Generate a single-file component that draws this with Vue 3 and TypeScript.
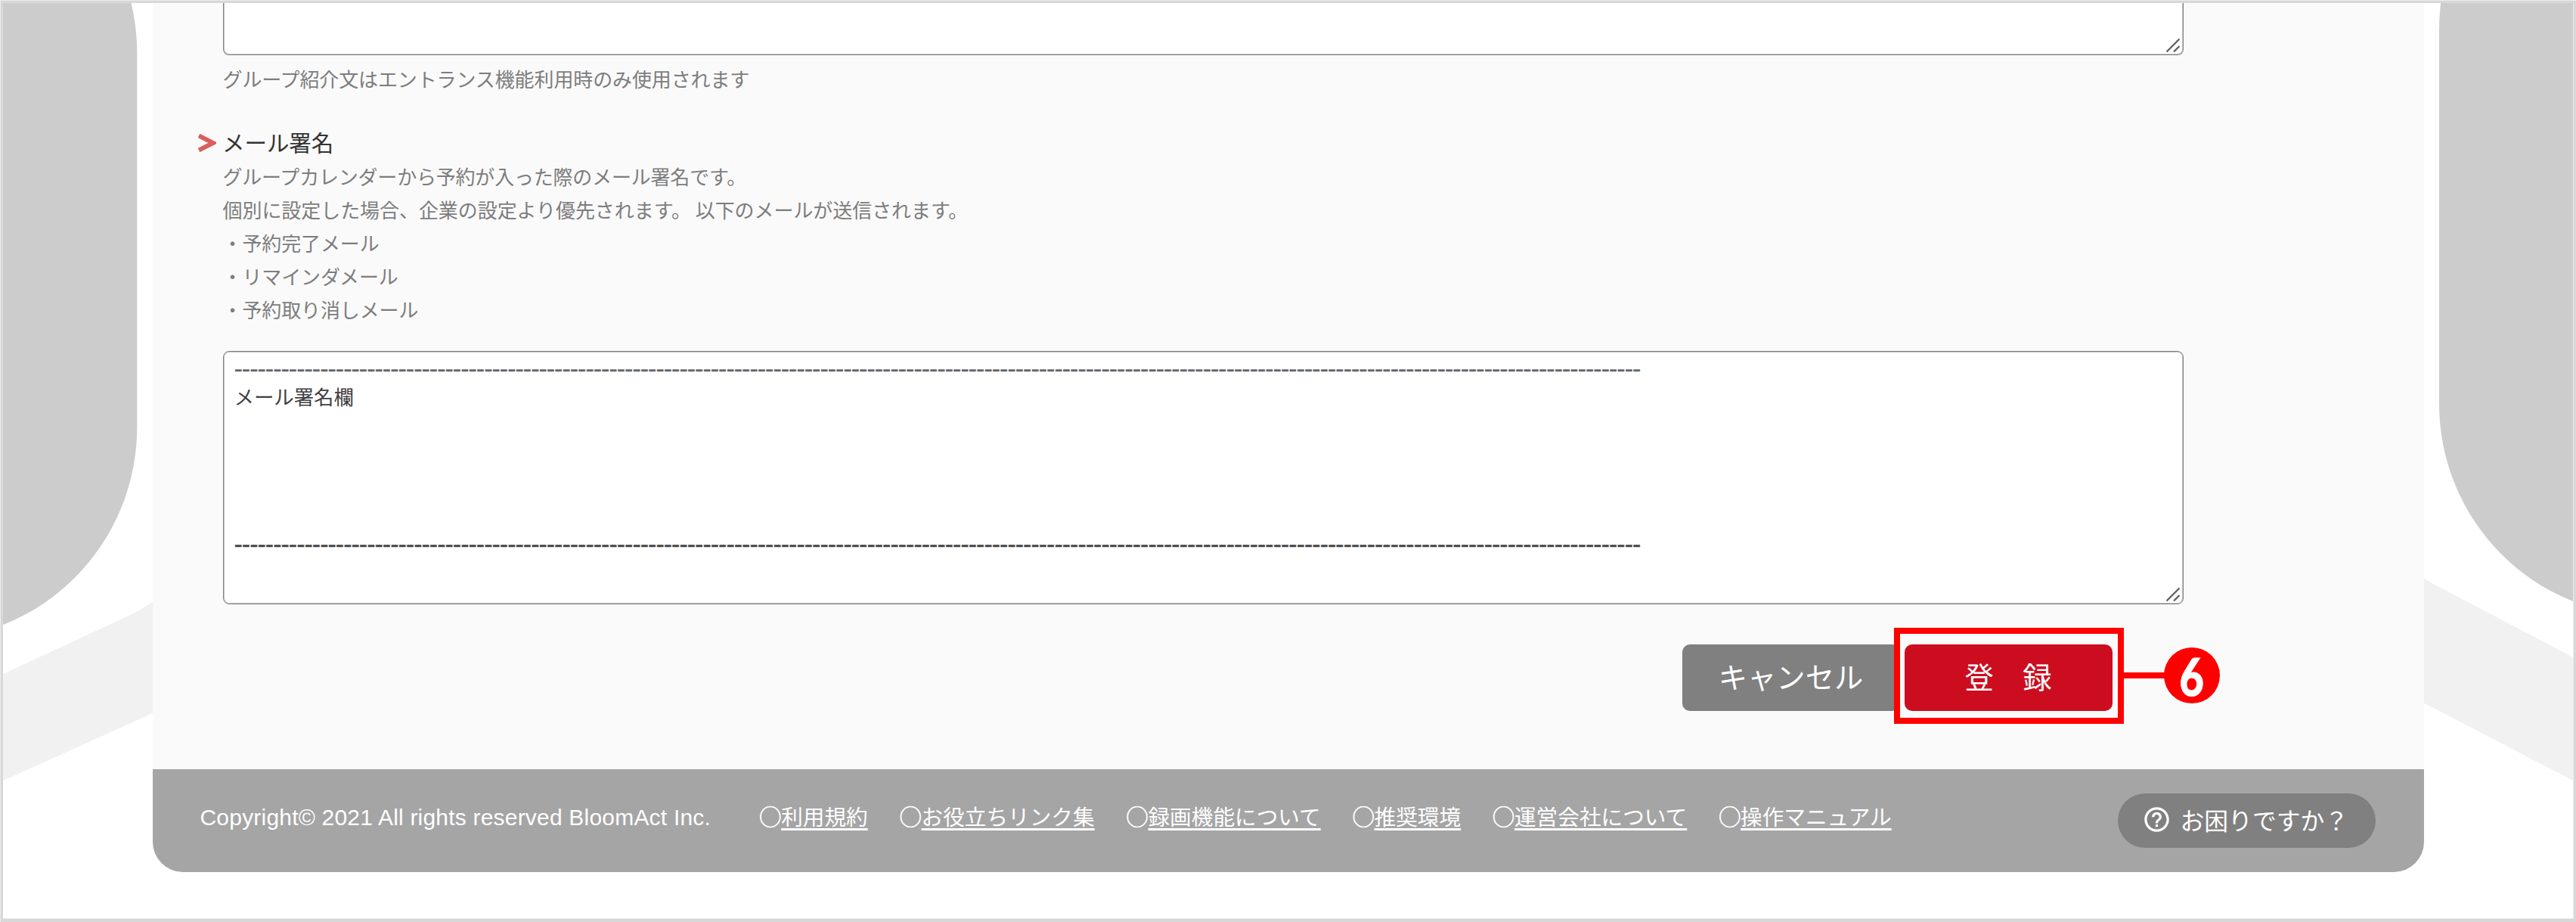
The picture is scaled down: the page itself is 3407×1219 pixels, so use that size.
<script setup lang="ts">
interface FooterLink {
  label: string
}

const notes: string[] = [
  'グループカレンダーから予約が入った際のメール署名です。',
  '個別に設定した場合、企業の設定より優先されます。 以下のメールが送信されます。',
  '・予約完了メール',
  '・リマインダメール',
  '・予約取り消しメール',
]

const rule: string = '-'.repeat(180)

const links: FooterLink[] = [
  { label: '利用規約' },
  { label: 'お役立ちリンク集' },
  { label: '録画機能について' },
  { label: '推奨環境' },
  { label: '運営会社について' },
  { label: '操作マニュアル' },
]
</script>

<template>
  <div class="page">
    <svg class="backdrop" viewBox="0 0 3407 1219" aria-hidden="true">
      <path d="M0 893 L168 815 Q186 807 204 794 L204 942 L0 1034Z" fill="#f1f1f1" />
      <path d="M3203 763 Q3214 770 3226 776 L3407 871 L3407 1034 L3203 928Z" fill="#f1f1f1" />
      <rect x="-400" y="-211" width="581.3" height="1057" rx="281" fill="#cccccc" />
      <rect x="3226" y="-242" width="581" height="1057" rx="281" fill="#cccccc" />
    </svg>

    <main class="panel">
      <section class="content">
        <div class="textarea intro-area">
          <svg class="grip" viewBox="0 0 20 20"><path d="M1.5 18.5 18.5 1.5M11 18.5 18.5 11" /></svg>
        </div>
        <p class="note intro-note">グループ紹介文はエントランス機能利用時のみ使用されます</p>

        <div class="heading">
          <svg class="chevron" viewBox="0 0 24 24"><path d="M1 2.500 20 12 1 21.500" /></svg>
          <h2>メール署名</h2>
        </div>
        <div class="notes">
          <p v-for="(note, i) in notes" :key="i" class="note" :class="'note-' + i">{{ note }}</p>
        </div>

        <div class="textarea sign-area">
          <div class="row dashes soft">{{ rule }}</div>
          <div class="row">メール署名欄</div>
          <div v-for="n in 4" :key="n" class="row"></div>
          <div class="row dashes">{{ rule }}</div>
          <svg class="grip" viewBox="0 0 20 20"><path d="M1.5 18.5 18.5 1.5M11 18.5 18.5 11" /></svg>
        </div>

        <div class="actions">
          <button class="btn cancel" type="button">キャンセル</button>
          <div class="submit">
            <button class="btn register" type="button">登　録</button>
            <div class="callout">
              <span class="leader"></span>
              <span class="badge"><span class="digit">6</span></span>
            </div>
          </div>
        </div>
      </section>

      <footer class="footer">
        <span class="copyright">Copyright© 2021 All rights reserved BloomAct Inc.</span>
        <nav class="links">
          <span v-for="link in links" :key="link.label" class="link"><span class="ring">◯</span><a>{{ link.label }}</a></span>
        </nav>
        <div class="help">
          <svg class="help-icon" viewBox="0 0 24 24">
            <path d="M11 18h2v-2h-2v2zm1-16C6.48 2 2 6.48 2 12s4.480 10 10 10 10-4.480 10-10S17.520 2 12 2zm0 18c-4.410 0-8-3.590-8-8s3.590-8 8-8 8 3.590 8 8-3.590 8-8 8zm0-14c-2.210 0-4 1.790-4 4h2c0-1.100.9-2 2-2s2 .9 2 2c0 2-3 1.750-3 5h2c0-2.250 3-2.500 3-5 0-2.210-1.790-4-4-4z" />
          </svg>
          <span class="help-label">お困りですか？</span>
        </div>
      </footer>
    </main>

    <div class="frame"></div>
  </div>
</template>

<style>
body {
  margin: 0;
  background: #fff;
}
</style>

<style scoped>
.page {
  position: relative;
  width: 3407px;
  height: 1219px;
  overflow: hidden;
  background: #fff;
  font-family: "Noto Sans CJK JP", sans-serif;
}
.page * {
  box-sizing: border-box;
}
.backdrop {
  position: absolute;
  inset: 0;
  width: 3407px;
  height: 1219px;
}
.frame {
  position: absolute;
  inset: 0;
  border-top: 1px solid #ebebeb;
  border-left: 1px solid #ebebeb;
  box-shadow: inset 3px 3px 0 #d8d8d8, inset -3px -4px 0 #d8d8d8, inset -4px -5px 0 #ebebeb;
}
.panel {
  position: relative;
  width: 3004px;
  height: 1152.5px;
  margin-left: 201.5px;
  border-radius: 0 0 40px 40px;
  overflow: hidden;
  display: flex;
  flex-direction: column;
}
.content {
  height: 1017px;
  flex: none;
  padding-left: 93px;
  background: #fafafa;
}
.textarea {
  position: relative;
  width: 2593.5px;
  border: 1px solid #808080;
  border-radius: 8px;
  background: #fff;
  box-shadow: inset 0 0 0 1px #c2c2c2;
}
.intro-area {
  height: 73px;
  border-top: 0;
  border-radius: 0 0 8px 8px;
}
.grip {
  position: absolute;
  right: 3px;
  bottom: 2px;
  width: 20px;
  height: 20px;
  fill: none;
  stroke: #5c5c5c;
  stroke-width: 2.2;
}
.note {
  margin: 0;
  height: 44.2px;
  line-height: 44.2px;
  font-size: 26px;
  letter-spacing: -0.12px;
  color: #7d7d7d;
  white-space: pre;
}
.note-0 {
  letter-spacing: -0.2px;
}
.note-1 {
  letter-spacing: -0.06px;
}
.intro-note {
  margin-top: 9px;
}
.heading {
  display: flex;
  align-items: center;
  height: 44px;
  margin-top: 41px;
  margin-left: -33px;
}
.chevron {
  width: 24px;
  height: 24px;
  margin-right: 8.5px;
  fill: none;
  stroke: #da6060;
  stroke-width: 6;
}
h2 {
  margin: -4px 0 0;
  font-size: 29.5px;
  font-weight: 400;
  letter-spacing: -0.05px;
  color: #333;
  line-height: 44px;
}
.notes {
  margin-top: -0.5px;
  margin-bottom: 32.8px;
}
.sign-area {
  height: 335px;
  padding: 3px 14px;
}
.row {
  height: 38.6px;
  line-height: 34.5px;
  font-size: 26.4px;
  color: #3f3f43;
  white-space: pre;
}
.dashes {
  font-family: "Liberation Sans", sans-serif;
  font-size: 34px;
  line-height: 38.6px;
  letter-spacing: -0.99px;
  -webkit-text-stroke: 0.3px currentColor;
}
.soft {
  color: #63656a;
}
.actions {
  display: flex;
  margin-top: 31px;
  margin-left: 1930px;
  height: 127px;
  align-items: flex-start;
}
.btn {
  border: 0;
  padding: 0;
  height: 88px;
  border-radius: 10px;
  color: #fff;
  font-family: inherit;
  font-size: 38.3px;
  line-height: 84px;
  padding-bottom: 4px;
  white-space: pre;
}
.cancel {
  width: 288px;
  margin-top: 22px;
  background: #808080;
}
.submit {
  position: relative;
  display: flex;
  width: 304.5px;
  height: 127px;
  margin-left: -8px;
  border: 8px solid #f00;
  background: #fafafa;
  padding: 14px 0 0 6px;
}
.register {
  width: 275px;
  background: #cc0d1f;
}
.callout {
  position: absolute;
  left: 296px;
  top: 18px;
  display: flex;
  align-items: center;
  height: 74px;
}
.leader {
  width: 54px;
  height: 8px;
  background: #f00;
}
.badge {
  width: 74px;
  height: 74px;
  margin-left: -1px;
  border-radius: 50%;
  background: #f00;
  color: #fff;
  font-family: Lato, sans-serif;
  font-weight: 900;
  font-size: 68px;
  line-height: 76px;
  text-align: center;
}
.digit {
  display: inline-block;
  transform: scaleX(0.82);
  -webkit-text-stroke: 1px #fff;
}
.footer {
  flex: 1;
  display: flex;
  align-items: flex-start;
  background: #a5a5a5;
  color: #fff;
  padding-left: 63px;
}
.copyright {
  width: 740px;
  height: 44px;
  margin-top: 42px;
  font-family: "Liberation Sans", sans-serif;
  font-size: 30px;
  line-height: 44px;
  letter-spacing: 0.2px;
  white-space: nowrap;
}
.links {
  display: flex;
  width: 1796px;
  gap: 42.2px;
  height: 44px;
  margin-top: 40px;
  font-size: 28.65px;
  line-height: 44px;
  white-space: nowrap;
}
.link {
  display: flex;
}
.ring {
  -webkit-text-stroke: 0.7px #fff;
}
.link a {
  text-decoration: underline;
  text-decoration-thickness: 3px;
  text-underline-offset: 4px;
  text-decoration-skip-ink: none;
}
.help {
  display: flex;
  align-items: center;
  width: 341.5px;
  height: 72px;
  margin-top: 32px;
  padding-left: 32px;
  border-radius: 36px;
  background: #808080;
  font-size: 31.8px;
  white-space: nowrap;
}
.help-label {
  height: 72px;
  line-height: 68px;
}
.help-icon {
  width: 39px;
  height: 39px;
  margin-top: -4px;
  margin-right: 12px;
  fill: #fff;
}
</style>
